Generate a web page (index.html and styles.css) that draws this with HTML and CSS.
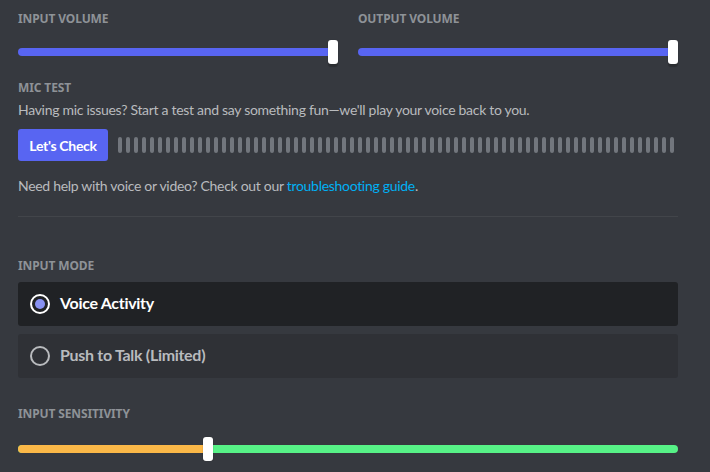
FILE: index.html
```html
<!DOCTYPE html>
<html lang="en">
<head>
    <meta charset="UTF-8">
    <meta name="viewport" content="width=device-width, initial-scale=1.0">
    <title>Voice Settings</title>
    <link rel="stylesheet" href="styles.css">
</head>
<body>
    <div class="settings">
        <div class="volume-row">
            <div class="volume-col">
                <h5 class="label">Input Volume</h5>
                <div class="slider">
                    <div class="track track-brand"></div>
                    <div class="grabber" style="left: 100%;"></div>
                </div>
            </div>
            <div class="volume-col">
                <h5 class="label">Output Volume</h5>
                <div class="slider">
                    <div class="track track-brand"></div>
                    <div class="grabber" style="left: 100%;"></div>
                </div>
            </div>
        </div>

        <h5 class="label mic-label">Mic Test</h5>
        <p class="note">Having mic issues? Start a test and say something fun—we'll play your voice back to you.</p>
        <div class="mic-test">
            <button class="check-btn">Let's Check</button>
            <div class="meter" id="meter"></div>
        </div>
        <p class="note help">Need help with voice or video? Check out our <a href="#">troubleshooting guide</a>.</p>

        <div class="divider"></div>

        <h5 class="label mode-label">Input Mode</h5>
        <div class="radio-item selected">
            <span class="radio"></span>
            <span class="radio-text">Voice Activity</span>
        </div>
        <div class="radio-item">
            <span class="radio"></span>
            <span class="radio-text">Push to Talk (Limited)</span>
        </div>

        <h5 class="label sens-label">Input Sensitivity</h5>
        <div class="slider">
            <div class="track track-sens">
                <div class="sens-low" style="width: 28.8%;"></div>
            </div>
            <div class="grabber" style="left: 28.8%;"></div>
        </div>
    </div>

    <script>
        // mic meter ticks
        const meter = document.getElementById('meter');
        for (let i = 0; i < 70; i++) {
            const tick = document.createElement('span');
            tick.className = 'tick';
            meter.appendChild(tick);
        }
    </script>
</body>
</html>
```

FILE: styles.css
```css
body {
    margin: 0;
    background: #36393f;
    font-family: Lato, "Noto Sans", sans-serif;
    color: #b9bbbe;
}
.settings {
    width: 660px;
    padding: 11px 18px 0;
}
.label {
    margin: 0;
    font-family: "Noto Sans", sans-serif;
    font-size: 12px;
    line-height: 16px;
    font-weight: 700;
    text-transform: uppercase;
    letter-spacing: -0.01em;
    color: #8e9297;
}
.volume-row {
    display: grid;
    grid-template-columns: 1fr 1fr;
    gap: 20px;
}
.volume-col .label {
    margin-bottom: 13px;
}
.slider {
    position: relative;
    height: 24px;
    display: flex;
    align-items: center;
}
.track {
    width: 100%;
    height: 8px;
    border-radius: 4px;
    overflow: hidden;
}
.track-brand {
    background: #5865f2;
}
.track-sens {
    background: #57f287;
}
.sens-low {
    height: 100%;
    background: #fbb848;
}
.grabber {
    position: absolute;
    top: 0;
    width: 10px;
    height: 24px;
    margin-left: -10px;
    background: #fff;
    border-radius: 3px;
    box-shadow: 0 3px 1px rgba(0,0,0,0.2), 0 0 1px rgba(0,0,0,0.3);
}
.track-sens + .grabber {
    margin-left: -5px;
}
.mic-label {
    margin-top: 16px;
}
.note {
    margin: 4px 0 0;
    font-size: 14px;
    line-height: 20px;
    letter-spacing: -0.3px;
}
.mic-test {
    display: flex;
    align-items: center;
    margin-top: 9px;
}
.check-btn {
    width: 90px;
    height: 32px;
    border: none;
    border-radius: 3px;
    background: #5865f2;
    color: #fff;
    font-family: inherit;
    font-size: 14px;
    font-weight: 700;
    letter-spacing: -0.3px;
    padding: 0;
    cursor: pointer;
}
.meter {
    display: flex;
    gap: 4px;
    margin-left: 10px;
}
.tick {
    width: 4px;
    height: 16px;
    border-radius: 2px;
    background: #72767d;
}
.help {
    margin-top: 15px;
}
.help a {
    color: #00b0f4;
    text-decoration: none;
}
.divider {
    height: 1px;
    background: #42454a;
    margin-top: 20px;
}
.mode-label {
    margin-top: 41px;
    margin-bottom: 8px;
}
.radio-item {
    display: flex;
    align-items: center;
    height: 44px;
    padding: 0 12px;
    margin-bottom: 8px;
    border-radius: 3px;
    background: #2f3136;
}
.radio-item.selected {
    background: #202225;
}
.radio {
    box-sizing: border-box;
    width: 20px;
    height: 20px;
    border: 2px solid #b9bbbe;
    border-radius: 50%;
    display: flex;
    align-items: center;
    justify-content: center;
    margin-right: 10px;
}
.selected .radio {
    border-color: #fff;
}
.selected .radio::after {
    content: "";
    width: 10px;
    height: 10px;
    border-radius: 50%;
    background: #8891f2;
}
.radio-text {
    font-size: 16px;
    line-height: 20px;
    font-weight: 700;
    letter-spacing: -0.3px;
    color: #b9bbbe;
    margin-top: -2px;
}
.selected .radio-text {
    color: #fff;
}
.sens-label {
    margin-top: 28px;
    margin-bottom: 15px;
}
```
